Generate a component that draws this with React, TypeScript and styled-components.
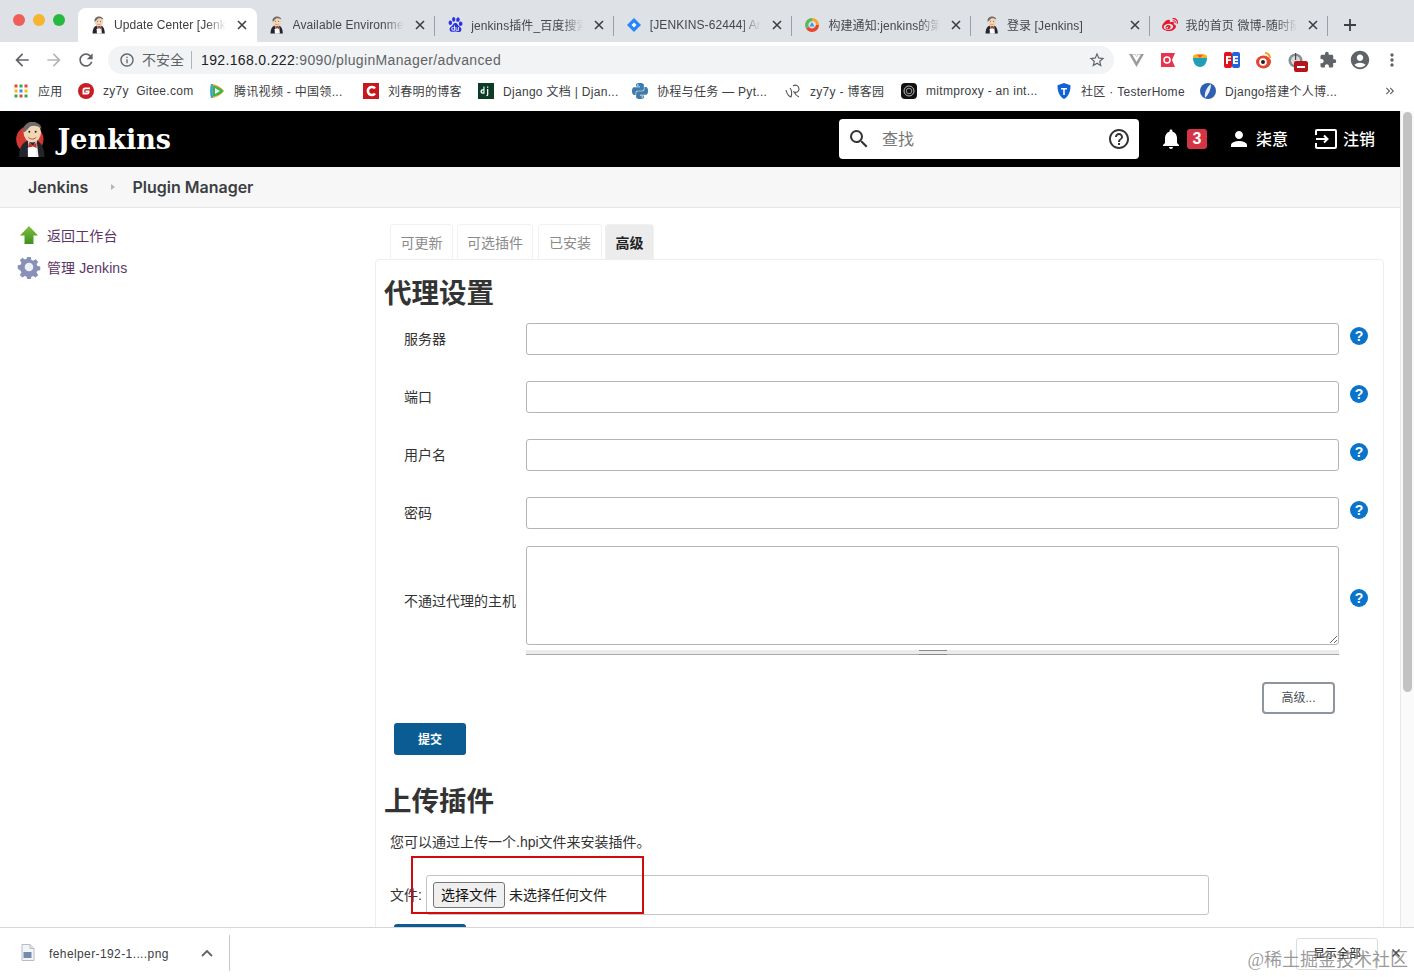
import React from "react";
import styled, { createGlobalStyle } from "styled-components";
import { FaWeibo } from "react-icons/fa";
import { SiBaidu, SiPython, SiVuedotjs } from "react-icons/si";
import {
  MdAccountCircle,
  MdArrowBack,
  MdArrowForward,
  MdExtension,
  MdHelpOutline,
  MdInfoOutline,
  MdKeyboardDoubleArrowRight,
  MdMoreVert,
  MdNotifications,
  MdPerson,
  MdRefresh,
  MdSearch,
  MdStarBorder,
} from "react-icons/md";

const sans = `"Liberation Sans", "Noto Sans CJK SC", sans-serif`;

const GlobalStyle = createGlobalStyle`
  html, body {
    margin: 0;
    padding: 0;
    overflow: hidden;
    background: #fff;
    font-family: ${sans};
  }
  * {
    box-sizing: border-box;
  }
`;

/* drawings */

const JenkinsLogo = ({ size = 18, disc = false }: { size?: number; disc?: boolean }) => (
  <svg width={size * 0.8} height={size} viewBox="0 0 30 38">
    {disc && <circle cx="14" cy="19" r="14" fill="#d33833" />}
    <path d="M3 37c0-9 3-15 9-17h9c5 2 8 8 8 17z" fill="#22252b" />
    <path d="M12 20l5 6 4-6 2 17h-9z" fill="#f4f1ea" />
    <path d="M13 22l4 3 4-3v6l-4-2-4 2z" fill="#c9302c" />
    <ellipse cx="16.500" cy="11.500" rx="9" ry="10.500" fill="#f1d5b5" />
    <path d="M7.500 12C6 4 12 1 17 1c5 0 9 3 9 7-3-3-9-4-12-2-2 2-3 4-6.500 6z" fill="#6d6b6d" />
    <path d="M12 16c3 3 6 3 9 0-1 4-8 4-9 0z" fill="#a0432f" />
    <circle cx="13.500" cy="11" r="1" fill="#222" />
    <circle cx="20" cy="11" r="1" fill="#222" />
    <rect x="12" y="27" width="8" height="10" rx="1" fill="#fff" />
  </svg>
);

const JiraIcon = () => (
  <svg width="16" height="16" viewBox="0 0 16 16">
    <path d="M8 1l7 7-7 7-7-7z" fill="#2684ff" />
    <path d="M8 5.500L10.500 8 8 10.500 5.500 8z" fill="#fff" />
  </svg>
);

const RingIcon = () => (
  <svg width="16" height="16" viewBox="0 0 16 16">
    <path d="M8 1a7 7 0 0 1 7 7h-3a4 4 0 0 0-4-4z" fill="#f5a623" />
    <path d="M15 8a7 7 0 0 1-7 7 7 7 0 0 1-6-3.500l3-1.500a4 4 0 0 0 7-2z" fill="#e8452c" />
    <path d="M2 11.500A7 7 0 0 1 8 1v3a4 4 0 0 0-3 6z" fill="#5cb85c" />
    <path d="M8 5l2.500 4.500h-5z" fill="#3d9be9" />
  </svg>
);

const AppsGrid = () => (
  <svg width="16" height="16" viewBox="0 0 16 16">
    {[2, 7, 12].map((y, r) =>
      [2, 7, 12].map((x, c) => (
        <rect
          key={`${r}${c}`}
          x={x - 0.5}
          y={y - 0.5}
          width="3"
          height="3"
          fill={["#ea4335", "#fbbc05", "#34a853", "#4285f4"][(r + c * 2) % 4]}
        />
      ))
    )}
  </svg>
);

const GiteeIcon = () => (
  <svg width="16" height="16" viewBox="0 0 16 16">
    <circle cx="8" cy="8" r="8" fill="#c71d23" />
    <path d="M12 4.500H7a2.500 2.500 0 0 0-2.500 2.500v4.500H9a2.500 2.500 0 0 0 2.500-2.500V7.500H7.500v1.500h2.200v.5H6.300V7a.8.8 0 0 1 .8-.8H12z" fill="#fff" />
  </svg>
);

const TencentIcon = () => (
  <svg width="16" height="16" viewBox="0 0 16 16">
    <path d="M2 1c5 0 10 3 13 7-3 4-8 7-13 7-1-4-1-10 0-14z" fill="#f7a823" />
    <path d="M4 2.500c4 .5 8 2.800 10.500 5.500-2.500 3-6 5-10.500 5.500z" fill="#3bb54a" />
    <path d="M6 5l5 3-5 3z" fill="#eaf6ff" />
    <path d="M2 1c.8 0 1.500.1 2 .2-.5 4-.5 9.600 0 13.600l-2 .2c-1-4-1-10 0-14z" fill="#2aa6e0" />
  </svg>
);

const RedCIcon = () => (
  <svg width="16" height="16" viewBox="0 0 16 16">
    <rect width="16" height="16" fill="#c8161d" />
    <path d="M12 5.500a4 4 0 1 0 0 5" stroke="#fff" strokeWidth="2.600" fill="none" />
  </svg>
);

const DjIcon = () => (
  <svg width="16" height="16" viewBox="0 0 16 16">
    <rect width="16" height="16" fill="#0c3c26" />
    <path d="M6.500 3.500v7.300H4.700a2.300 2.300 0 1 1 0-4.600h.7V3.500zM4.900 7.500a1 1 0 0 0 0 2h.5v-2zM9 3.500h1.300v1.300H9zM9 6h1.300v5.500c0 1-.5 1.600-1.700 1.800l-.3-1c.5-.2.700-.4.700-1z" fill="#fff" />
  </svg>
);

const BlogIcon = () => (
  <svg width="16" height="16" viewBox="0 0 16 16" fill="none" stroke="#555" strokeWidth="1.100">
    <path d="M1 7c1 5 4 7 5 7 1-3 .5-7-1-9" />
    <path d="M8 3c3-2 6 0 6 3s-3 4-5 3c1 2 3 4 5 5" />
  </svg>
);

const MitmIcon = () => (
  <svg width="16" height="16" viewBox="0 0 16 16" fill="none">
    <rect width="16" height="16" rx="4" fill="#111" />
    <circle cx="8" cy="8" r="5" stroke="#bbb" strokeWidth="1" />
    <circle cx="8" cy="8" r="2.800" stroke="#999" strokeWidth="1" />
  </svg>
);

const ShieldIcon = () => (
  <svg width="16" height="16" viewBox="0 0 16 16">
    <path d="M8 0l6.500 2.200c0 6-1.500 11-6.500 13.800C3 13.200 1.500 8.200 1.500 2.200z" fill="#1162d6" />
    <path d="M5 5h6v1.500H8.800V12H7.200V6.500H5z" fill="#fff" />
  </svg>
);

const DjangoBlogIcon = () => (
  <svg width="16" height="16" viewBox="0 0 16 16">
    <circle cx="8" cy="8" r="8" fill="#2f5fb3" />
    <path d="M11 1C7 4 4 9 5 15c3-3 6-8 6-14z" fill="#e9eef8" />
  </svg>
);

const ExtRed = () => (
  <svg width="16" height="16" viewBox="0 0 16 16">
    <path d="M1 1h14l-3 7 3 7H1z" fill="#e8344e" />
    <circle cx="7" cy="8" r="3" fill="none" stroke="#fff" strokeWidth="1.500" />
  </svg>
);

const ExtBowl = () => (
  <svg width="16" height="16" viewBox="0 0 16 16">
    <path d="M1 4c2-3 12-3 14 0v2H1z" fill="#f0b429" />
    <path d="M5 3l3 3 3-3z" fill="#e2574c" />
    <path d="M1 6h14c0 5-3 9-7 9S1 11 1 6z" fill="#1f9fb5" />
  </svg>
);

const ExtFe = () => (
  <svg width="16" height="16" viewBox="0 0 16 16">
    <rect width="8" height="16" rx="2" fill="#e3111b" />
    <rect x="8" width="8" height="16" rx="2" fill="#2463d8" />
    <path d="M2 4h5v1.800H4v1.400h3V9H4v3H2zM9 4h5v1.800h-3v1.400h3V9h-3v1.200h3V12H9z" fill="#fff" />
  </svg>
);

const ExtEye = () => (
  <svg width="16" height="18" viewBox="0 0 16 18">
    <ellipse cx="7.500" cy="11" rx="7.500" ry="6.500" fill="#e6452f" />
    <circle cx="7" cy="11" r="3.800" fill="#fff" />
    <circle cx="7" cy="11" r="2" fill="#222" />
    <path d="M9 1c3 0 6 2 6 6h-2c0-2-2-4-4-4z" fill="#f3a52d" />
  </svg>
);

const ExtMuted = () => (
  <svg width="16" height="16" viewBox="0 0 16 16">
    <circle cx="7.500" cy="8.500" r="7" fill="#8a8d90" />
    <circle cx="7.500" cy="8.500" r="4.500" fill="#d8dadc" />
    <path d="M7 1h1.200v7H7z" fill="#444" />
  </svg>
);

const LogoutIcon = () => (
  <svg width="22" height="20" viewBox="0 0 22 20" fill="none" stroke="#fff" strokeWidth="2">
    <path d="M1 6V2a1 1 0 0 1 1-1h18a1 1 0 0 1 1 1v16a1 1 0 0 1-1 1H2a1 1 0 0 1-1-1v-4" />
    <path d="M1 10h11M9 6.500l3.500 3.500L9 13.500" />
  </svg>
);

const UpArrow = () => (
  <svg width="20" height="20" viewBox="0 0 20 20">
    <defs>
      <linearGradient id="up" x1="0" y1="0" x2="0" y2="1">
        <stop offset="0" stopColor="#7fbf3f" />
        <stop offset="1" stopColor="#3f8f1f" />
      </linearGradient>
    </defs>
    <path d="M10 1l9 9.500h-4.500V19h-9v-8.500H1z" fill="url(#up)" />
  </svg>
);

const Gear = () => (
  <svg width="24" height="24" viewBox="0 0 24 24">
    <path
      d="M10 1h4l.6 3.200 2 .9 2.800-1.800 2.800 2.800-1.800 2.800.9 2 3.200.6v4l-3.200.6-.9 2 1.800 2.800-2.800 2.800-2.800-1.800-2 .9-.6 3.200h-4l-.6-3.200-2-.9-2.800 1.800-2.800-2.800 1.800-2.800-.9-2L-.5 14v-4l3.200-.6.9-2-1.800-2.800 2.800-2.800 2.800 1.800 2-.9z"
      fill="#8790b8"
      transform="translate(1.200 1.200) scale(.9)"
    />
    <circle cx="12" cy="12" r="4.300" fill="#eef0f6" />
  </svg>
);

const PngFile = () => (
  <svg width="14" height="17" viewBox="0 0 14 17">
    <path d="M1 .5h8l4 4v12H1z" fill="#f3f4f7" stroke="#b8bcc6" />
    <path d="M9 .5v4h4" fill="#dfe2e8" stroke="#b8bcc6" />
    <rect x="2.500" y="8" width="8" height="6" fill="#7489ad" />
  </svg>
);

/* data */

const tabs = [
  { icon: <JenkinsLogo />, title: "Update Center [Jenkins]", active: true },
  { icon: <JenkinsLogo />, title: "Available Environment Variables" },
  { icon: <SiBaidu size={15} color="#2932e1" />, title: "jenkins插件_百度搜索结果" },
  { icon: <JiraIcon />, title: "[JENKINS-62444] Artifact" },
  { icon: <RingIcon />, title: "构建通知:jenkins的第三方" },
  { icon: <JenkinsLogo />, title: "登录 [Jenkins]" },
  { icon: <FaWeibo size={16} color="#e6162d" />, title: "我的首页 微博-随时随地发现" },
];

const bookmarks = [
  { icon: <AppsGrid />, label: "应用", width: 58 },
  { icon: <GiteeIcon />, label: "zy7y  Gitee.com", width: 124 },
  { icon: <TencentIcon />, label: "腾讯视频 - 中国领...", width: 147 },
  { icon: <RedCIcon />, label: "刘春明的博客", width: 108 },
  { icon: <DjIcon />, label: "Django 文档 | Djan...", width: 147 },
  { icon: <SiPython size={16} color="#3f7cac" />, label: "协程与任务 — Pyt...", width: 146 },
  { icon: <BlogIcon />, label: "zy7y - 博客园", width: 109 },
  { icon: <MitmIcon />, label: "mitmproxy - an int...", width: 148 },
  { icon: <ShieldIcon />, label: "社区 · TesterHome", width: 137 },
  { icon: <DjangoBlogIcon />, label: "Django搭建个人博...", width: 147 },
];

const proxyFields = ["服务器", "端口", "用户名", "密码"];

/* browser chrome */

const Window = styled.div`
  width: 1414px;
  height: 977px;
  display: flex;
  flex-direction: column;
  overflow: hidden;
  background: #fff;
  position: relative;
`;

const TabStrip = styled.div`
  height: 42px;
  flex: none;
  display: flex;
  align-items: flex-end;
  background: #dee1e6;
`;

const Lights = styled.div`
  width: 78px;
  height: 42px;
  flex: none;
  padding-left: 13px;
  display: flex;
  align-items: center;
  gap: 8px;
  padding-bottom: 2px;
`;

const Light = styled.span<{ $color: string }>`
  width: 12px;
  height: 12px;
  border-radius: 50%;
  background: ${(p) => p.$color};
`;

const Tab = styled.div<{ $active?: boolean; $sep?: boolean }>`
  width: 178.600px;
  height: 34px;
  flex: none;
  display: flex;
  align-items: center;
  padding: 0 7px 1px 12px;
  gap: 8px;
  font-size: 12px;
  letter-spacing: 0.100px;
  color: ${(p) => (p.$active ? "#3c4043" : "#45484c")};
  background: ${(p) => (p.$active ? "#fff" : "transparent")};
  border-radius: 8px 8px 0 0;
  position: relative;

  &::after {
    content: "";
    display: ${(p) => (p.$sep ? "block" : "none")};
    position: absolute;
    right: 0;
    top: 8px;
    height: 20px;
    width: 1px;
    background: #9aa0a6;
  }
`;

const TabIcon = styled.span`
  width: 16px;
  height: 16px;
  flex: none;
  display: flex;
  align-items: center;
  justify-content: center;
`;

const TabTitle = styled.span`
  flex: 1;
  min-width: 0;
  white-space: nowrap;
  overflow: hidden;
  -webkit-mask-image: linear-gradient(to right, #000 82%, transparent);
  mask-image: linear-gradient(to right, #000 82%, transparent);
`;

const TabClose = styled.svg`
  width: 16px;
  height: 16px;
  flex: none;
  stroke: #3c4043;
  stroke-width: 1.600;
`;

const NewTab = styled.svg`
  width: 14px;
  height: 14px;
  margin: 0 0 10px 15px;
  stroke: #3c4043;
  stroke-width: 1.800;
`;

const Toolbar = styled.div`
  height: 36px;
  flex: none;
  display: flex;
  align-items: center;
  background: #fff;
`;

const NavButton = styled.span<{ $muted?: boolean }>`
  width: 32px;
  height: 32px;
  flex: none;
  display: flex;
  align-items: center;
  justify-content: center;
  color: ${(p) => (p.$muted ? "#b4b6b9" : "#5f6368")};
  font-size: 20px;
`;

const NavGroup = styled.div`
  display: flex;
  padding-left: 6px;
  padding-right: 6px;
  flex: none;
`;

const Omnibox = styled.div`
  width: 1006px;
  height: 28px;
  flex: none;
  display: flex;
  align-items: center;
  padding: 0 8px 0 11px;
  border-radius: 14px;
  background: #f1f3f4;
  font-size: 14px;
  letter-spacing: 0.350px;
  color: #5f6368;
`;

const Insecure = styled.span`
  margin-left: 7px;
  padding-right: 7px;
  margin-right: 9px;
  border-right: 1px solid #b0b3b7;
  line-height: 18px;
  letter-spacing: 0;
`;

const UrlHost = styled.span`
  color: #202124;
`;

const UrlSpacer = styled.span`
  flex: 1;
`;

const Extensions = styled.div`
  flex: 1;
  display: flex;
  padding-left: 6px;
  align-items: center;
`;

const ExtSlot = styled.span`
  width: 32px;
  flex: none;
  height: 24px;
  display: flex;
  align-items: center;
  justify-content: center;
  position: relative;
  color: #5f6368;
`;

const MutedBadge = styled.span`
  position: absolute;
  right: 4px;
  bottom: 0;
  width: 14px;
  height: 11px;
  border-radius: 2px;
  background: #b5141b;
  display: flex;
  align-items: center;
  justify-content: center;

  &::after {
    content: "";
    width: 8px;
    height: 2px;
    background: #fff;
  }
`;

const BookmarkBar = styled.div`
  height: 33px;
  flex: none;
  display: flex;
  align-items: center;
  padding: 0 0 8px 13px;
  background: #fff;
  font-size: 12px;
  letter-spacing: 0.300px;
  color: #3c4043;
  gap: 7px;
`;

const Bookmark = styled.div<{ $width: number }>`
  width: ${(p) => p.$width}px;
  flex: none;
  display: flex;
  align-items: center;
  gap: 9px;
  white-space: pre;
`;

const BookmarkIcon = styled.span`
  width: 16px;
  height: 16px;
  flex: none;
  display: flex;
`;

const MoreBookmarks = styled.span`
  margin-left: auto;
  padding-right: 17px;
  color: #5f6368;
  display: flex;
  font-size: 14px;
`;

/* jenkins page */

const Viewport = styled.div`
  flex: 1;
  min-height: 0;
  display: flex;
  overflow: hidden;
`;

const Page = styled.div`
  flex: 1;
  min-width: 0;
  display: flex;
  flex-direction: column;
`;

const ScrollTrack = styled.div`
  width: 14px;
  flex: none;
  background: #fafafa;
  border-left: 1px solid #e8e8e8;
  padding: 1px 2px 0 2px;
`;

const ScrollThumb = styled.div`
  height: 580px;
  border-radius: 5px;
  background: #c2c2c2;
`;

const Header = styled.header`
  height: 56px;
  flex: none;
  background: #000;
  display: flex;
  align-items: center;
  padding-left: 16px;
  color: #fff;
`;

const Brand = styled.div`
  display: flex;
  align-items: center;
  gap: 12px;
  font-family: "DejaVu Serif", serif;
  font-weight: 700;
  font-size: 27px;
`;

const SearchBox = styled.div`
  width: 300px;
  height: 40px;
  margin-left: auto;
  padding: 0 8px;
  display: flex;
  align-items: center;
  background: #fff;
  border-radius: 4px;
  color: #333;
`;

const SearchHint = styled.span`
  flex: 1;
  margin-left: 11px;
  padding-bottom: 2px;
  font-size: 16px;
  color: #777;
`;

const HeaderActions = styled.div`
  display: flex;
  align-items: center;
  margin-left: 20px;
  padding-right: 25px;
  font-size: 16px;
`;

const HeaderLink = styled.span<{ $gap: number; $ml?: number }>`
  display: flex;
  align-items: center;
  gap: ${(p) => p.$gap}px;
  margin-left: ${(p) => p.$ml ?? 0}px;
  font-weight: 500;
`;

const HeaderText = styled.span`
  padding-bottom: 2px;
`;

const CountBadge = styled.span`
  width: 20px;
  height: 20px;
  border-radius: 3px;
  background: #d33545;
  font-size: 16px;
  font-weight: 700;
  line-height: 20px;
  text-align: center;
`;

const Breadcrumbs = styled.nav`
  height: 41px;
  flex: none;
  display: flex;
  align-items: center;
  padding-left: 28px;
  background: #f7f7f7;
  border-bottom: 1px solid #e6e6e6;
  font-family: Inter, sans-serif;
  font-size: 16px;
  font-weight: 600;
  color: #3b3f44;
`;

const CrumbArrow = styled.span`
  margin: 0 17px 0 23px;
  border-left: 4px solid #b5b5b5;
  border-top: 3px solid transparent;
  border-bottom: 3px solid transparent;
`;

const Body = styled.div`
  flex: 1;
  min-height: 0;
  display: flex;
  padding-top: 11px;
`;

const SidePanel = styled.aside`
  width: 375px;
  flex: none;
  padding: 0 0 0 16px;
`;

const SideLink = styled.a`
  height: 32px;
  display: flex;
  align-items: center;
  font-size: 14px;
  letter-spacing: 0.100px;
  color: #5c3566;
`;

const SideIcon = styled.span`
  width: 31px;
  flex: none;
  display: flex;
  justify-content: center;
  padding-right: 5px;
`;

const Main = styled.main`
  flex: 1;
  min-width: 0;
  padding-top: 5px;
  padding-right: 16px;
`;

const PluginTabs = styled.div`
  display: flex;
  height: 35px;
  padding-left: 15px;
`;

const PluginTab = styled.div<{ $width: number; $gap: number; $active?: boolean }>`
  width: ${(p) => p.$width}px;
  margin-right: ${(p) => p.$gap}px;
  border: 1px solid #f1f1f1;
  border-bottom: 0;
  border-radius: 4px 4px 0 0;
  text-align: center;
  line-height: 36px;
  font-size: 14px;
  color: ${(p) => (p.$active ? "#222" : "#8a8a8a")};
  font-weight: ${(p) => (p.$active ? 700 : 400)};
  background: ${(p) => (p.$active ? "#ececec" : "#fff")};
`;

const Pane = styled.section`
  height: 700px;
  border: 1px solid #eee;
  border-radius: 4px 4px 0 0;
`;

const Heading = styled.h2<{ $top: number; $bottom: number }>`
  margin: ${(p) => p.$top}px 0 ${(p) => p.$bottom}px 8px;
  height: 44px;
  line-height: 44px;
  font-size: 27.500px;
  font-weight: 700;
  color: #333;
`;

const FieldRow = styled.div<{ $after: number }>`
  display: flex;
  align-items: center;
  padding-left: 28px;
  margin-bottom: ${(p) => p.$after}px;
`;

const FieldLabel = styled.label`
  width: 122px;
  flex: none;
  padding-bottom: 2px;
  font-size: 14px;
  color: #333;
`;

const TextInput = styled.input`
  width: 813px;
  height: 32px;
  flex: none;
  padding: 0 8px;
  background: #fff;
  border: 1px solid #b4b4b4;
  border-radius: 3px;
  outline: 0;
`;

const AreaColumn = styled.div`
  width: 813px;
  flex: none;
`;

const TextArea = styled.textarea`
  display: block;
  width: 813px;
  height: 99px;
  background: #fff;
  border: 1px solid #b4b4b4;
  border-radius: 3px;
  outline: 0;
`;

const AreaGrip = styled.div`
  height: 5px;
  margin-top: 5px;
  background: #ebebeb;
  border-bottom: 1px solid #a8a8a8;
  display: flex;
  justify-content: center;

  &::after {
    content: "";
    width: 28px;
    height: 3px;
    border-top: 1px solid #888;
    border-bottom: 1px solid #888;
  }
`;

const HelpDot = styled.span<{ $up?: number }>`
  width: 18px;
  height: 18px;
  flex: none;
  margin-left: 11px;
  margin-top: ${(p) => p.$up ?? -6}px;
  border-radius: 50%;
  background: #0a74cb;
  color: #fff;
  font-size: 14px;
  font-weight: 700;
  line-height: 18px;
  text-align: center;
`;

const AdvancedRow = styled.div`
  display: flex;
  justify-content: flex-end;
  padding-right: 48px;
  margin-top: 27px;
`;

const AdvancedButton = styled.button`
  width: 73px;
  height: 32px;
  padding: 0 0 3px;
  background: #fff;
  border: 2px solid #8e959c;
  border-radius: 4px;
  font: 12px ${sans};
  color: #4a4f55;
`;

const SubmitButton = styled.button<{ $top: number }>`
  display: block;
  width: 72px;
  height: 32px;
  margin: ${(p) => p.$top}px 0 0 18px;
  padding: 0 0 2px;
  background: #0b5c92;
  border: 0;
  border-radius: 3px;
  font: 700 12px ${sans};
  color: #fff;
`;

const UploadHint = styled.p`
  margin: 8px 0 0 14px;
  font-size: 14px;
  line-height: 20px;
  color: #333;
`;

const FileRow = styled.div`
  display: flex;
  align-items: center;
  margin: 23px 0 0 14px;
  position: relative;
  font-size: 14px;
  color: #333;
`;

const FileLabel = styled.span`
  width: 36px;
  flex: none;
  padding-bottom: 2px;
`;

const FileBox = styled.div`
  width: 783px;
  height: 40px;
  flex: none;
  display: flex;
  align-items: center;
  padding-left: 6px;
  border: 1px solid #c4c4c4;
  border-radius: 3px;
`;

const ChooseButton = styled.span`
  width: 72px;
  height: 26px;
  flex: none;
  background: #efefef;
  border: 1px solid #767676;
  border-radius: 3px;
  text-align: center;
  line-height: 24px;
  color: #111;
`;

const NoFile = styled.span`
  margin-left: 4px;
  padding-bottom: 2px;
  color: #222;
`;

const RedMark = styled.div`
  position: absolute;
  left: 21px;
  top: -19px;
  width: 233px;
  height: 58px;
  border: 2.500px solid #d40a0a;
  pointer-events: none;
`;

/* download shelf */

const DownloadBar = styled.footer`
  height: 50px;
  flex: none;
  display: flex;
  align-items: center;
  background: #fff;
  border-top: 1px solid #d6d6d6;
  font-size: 12px;
  color: #3c4043;
`;

const DownloadItem = styled.div`
  width: 230px;
  height: 36px;
  flex: none;
  display: flex;
  align-items: center;
  padding-left: 21px;
  border-right: 1px solid #c9c9c9;
`;

const DownloadName = styled.span`
  margin-left: 14px;
  padding-top: 2px;
  flex: 1;
  letter-spacing: 0.400px;
`;

const Chevron = styled.svg`
  width: 12px;
  height: 8px;
  margin-right: 16px;
  fill: none;
  stroke: #5f6368;
  stroke-width: 1.800;
`;

const ShowAll = styled.span`
  margin-left: auto;
  width: 82px;
  height: 32px;
  margin-top: 3px;
  flex: none;
  border: 1px solid #dadce0;
  border-radius: 3px;
  text-align: center;
  line-height: 30px;
  color: #222;
`;

const ShelfClose = styled.svg`
  width: 14px;
  height: 14px;
  margin: 0 11px 0 11px;
  stroke: #4a4a4a;
  stroke-width: 1.800;
`;

const Watermark = styled.div`
  position: absolute;
  right: 6px;
  bottom: 7px;
  font-family: "Liberation Serif", "Noto Sans CJK SC", serif;
  font-size: 18px;
  line-height: 20px;
  color: rgba(120, 120, 120, 0.75);
  pointer-events: none;
`;

const Cross = () => <path d="M4 4l8 8M12 4l-8 8" />;

export default function App() {
  return (
    <Window>
      <GlobalStyle />
      <TabStrip>
        <Lights>
          <Light $color="#ed5f57" />
          <Light $color="#f5b52e" />
          <Light $color="#27b840" />
        </Lights>
        {tabs.map((t) => (
          <Tab key={t.title} $active={t.active} $sep={!t.active}>
            <TabIcon>{t.icon}</TabIcon>
            <TabTitle>{t.title}</TabTitle>
            <TabClose viewBox="0 0 16 16">
              <Cross />
            </TabClose>
          </Tab>
        ))}
        <NewTab viewBox="0 0 14 14">
          <path d="M7 1v12M1 7h12" />
        </NewTab>
      </TabStrip>

      <Toolbar>
        <NavGroup>
          <NavButton><MdArrowBack /></NavButton>
          <NavButton $muted><MdArrowForward /></NavButton>
          <NavButton><MdRefresh /></NavButton>
        </NavGroup>
        <Omnibox>
          <MdInfoOutline size={16} />
          <Insecure>不安全</Insecure>
          <UrlHost>192.168.0.222</UrlHost>:9090/pluginManager/advanced
          <UrlSpacer />
          <MdStarBorder size={18} />
        </Omnibox>
        <Extensions>
          <ExtSlot><SiVuedotjs size={15} color="#9a9da1" /></ExtSlot>
          <ExtSlot><ExtRed /></ExtSlot>
          <ExtSlot><ExtBowl /></ExtSlot>
          <ExtSlot><ExtFe /></ExtSlot>
          <ExtSlot><ExtEye /></ExtSlot>
          <ExtSlot>
            <ExtMuted />
            <MutedBadge />
          </ExtSlot>
          <ExtSlot><MdExtension size={18} /></ExtSlot>
          <ExtSlot><MdAccountCircle size={22} /></ExtSlot>
          <ExtSlot><MdMoreVert size={20} /></ExtSlot>
        </Extensions>
      </Toolbar>

      <BookmarkBar>
        {bookmarks.map((b) => (
          <Bookmark key={b.label} $width={b.width}>
            <BookmarkIcon>{b.icon}</BookmarkIcon>
            {b.label}
          </Bookmark>
        ))}
        <MoreBookmarks><MdKeyboardDoubleArrowRight /></MoreBookmarks>
      </BookmarkBar>

      <Viewport>
        <Page>
          <Header>
            <Brand>
              <JenkinsLogo size={37} disc />
              Jenkins
            </Brand>
            <SearchBox>
              <MdSearch size={24} />
              <SearchHint>查找</SearchHint>
              <MdHelpOutline size={24} />
            </SearchBox>
            <HeaderActions>
              <HeaderLink $gap={4}>
                <MdNotifications size={24} />
                <CountBadge>3</CountBadge>
              </HeaderLink>
              <HeaderLink $gap={5} $ml={20}>
                <MdPerson size={24} />
                <HeaderText>柒意</HeaderText>
              </HeaderLink>
              <HeaderLink $gap={6} $ml={27}>
                <LogoutIcon />
                <HeaderText>注销</HeaderText>
              </HeaderLink>
            </HeaderActions>
          </Header>

          <Breadcrumbs>
            Jenkins
            <CrumbArrow />
            Plugin Manager
          </Breadcrumbs>

          <Body>
            <SidePanel>
              <SideLink>
                <SideIcon><UpArrow /></SideIcon>
                返回工作台
              </SideLink>
              <SideLink>
                <SideIcon><Gear /></SideIcon>
                管理 Jenkins
              </SideLink>
            </SidePanel>

            <Main>
              <PluginTabs>
                <PluginTab $width={63} $gap={4}>可更新</PluginTab>
                <PluginTab $width={76} $gap={5}>可选插件</PluginTab>
                <PluginTab $width={64} $gap={3}>已安装</PluginTab>
                <PluginTab $width={49} $gap={0} $active>高级</PluginTab>
              </PluginTabs>
              <Pane>
                <Heading $top={12} $bottom={7}>代理设置</Heading>
                {proxyFields.map((f, i) => (
                  <FieldRow key={f} $after={i === 3 ? 17 : 26}>
                    <FieldLabel>{f}</FieldLabel>
                    <TextInput />
                    <HelpDot>?</HelpDot>
                  </FieldRow>
                ))}
                <FieldRow $after={0}>
                  <FieldLabel>不通过代理的主机</FieldLabel>
                  <AreaColumn>
                    <TextArea />
                    <AreaGrip />
                  </AreaColumn>
                  <HelpDot $up={-5}>?</HelpDot>
                </FieldRow>
                <AdvancedRow>
                  <AdvancedButton>高级...</AdvancedButton>
                </AdvancedRow>
                <SubmitButton $top={9}>提交</SubmitButton>

                <Heading $top={25} $bottom={8}>上传插件</Heading>
                <UploadHint>您可以通过上传一个.hpi文件来安装插件。</UploadHint>
                <FileRow>
                  <FileLabel>文件:</FileLabel>
                  <FileBox>
                    <ChooseButton>选择文件</ChooseButton>
                    <NoFile>未选择任何文件</NoFile>
                  </FileBox>
                  <RedMark />
                </FileRow>
                <SubmitButton $top={9}>上传</SubmitButton>
              </Pane>
            </Main>
          </Body>
        </Page>
        <ScrollTrack>
          <ScrollThumb />
        </ScrollTrack>
      </Viewport>

      <DownloadBar>
        <DownloadItem>
          <PngFile />
          <DownloadName>fehelper-192-1....png</DownloadName>
          <Chevron viewBox="0 0 12 8">
            <path d="M1 7l5-5 5 5" />
          </Chevron>
        </DownloadItem>
        <ShowAll>显示全部</ShowAll>
        <ShelfClose viewBox="0 0 16 16">
          <Cross />
        </ShelfClose>
      </DownloadBar>
      <Watermark>@稀土掘金技术社区</Watermark>
    </Window>
  );
}
